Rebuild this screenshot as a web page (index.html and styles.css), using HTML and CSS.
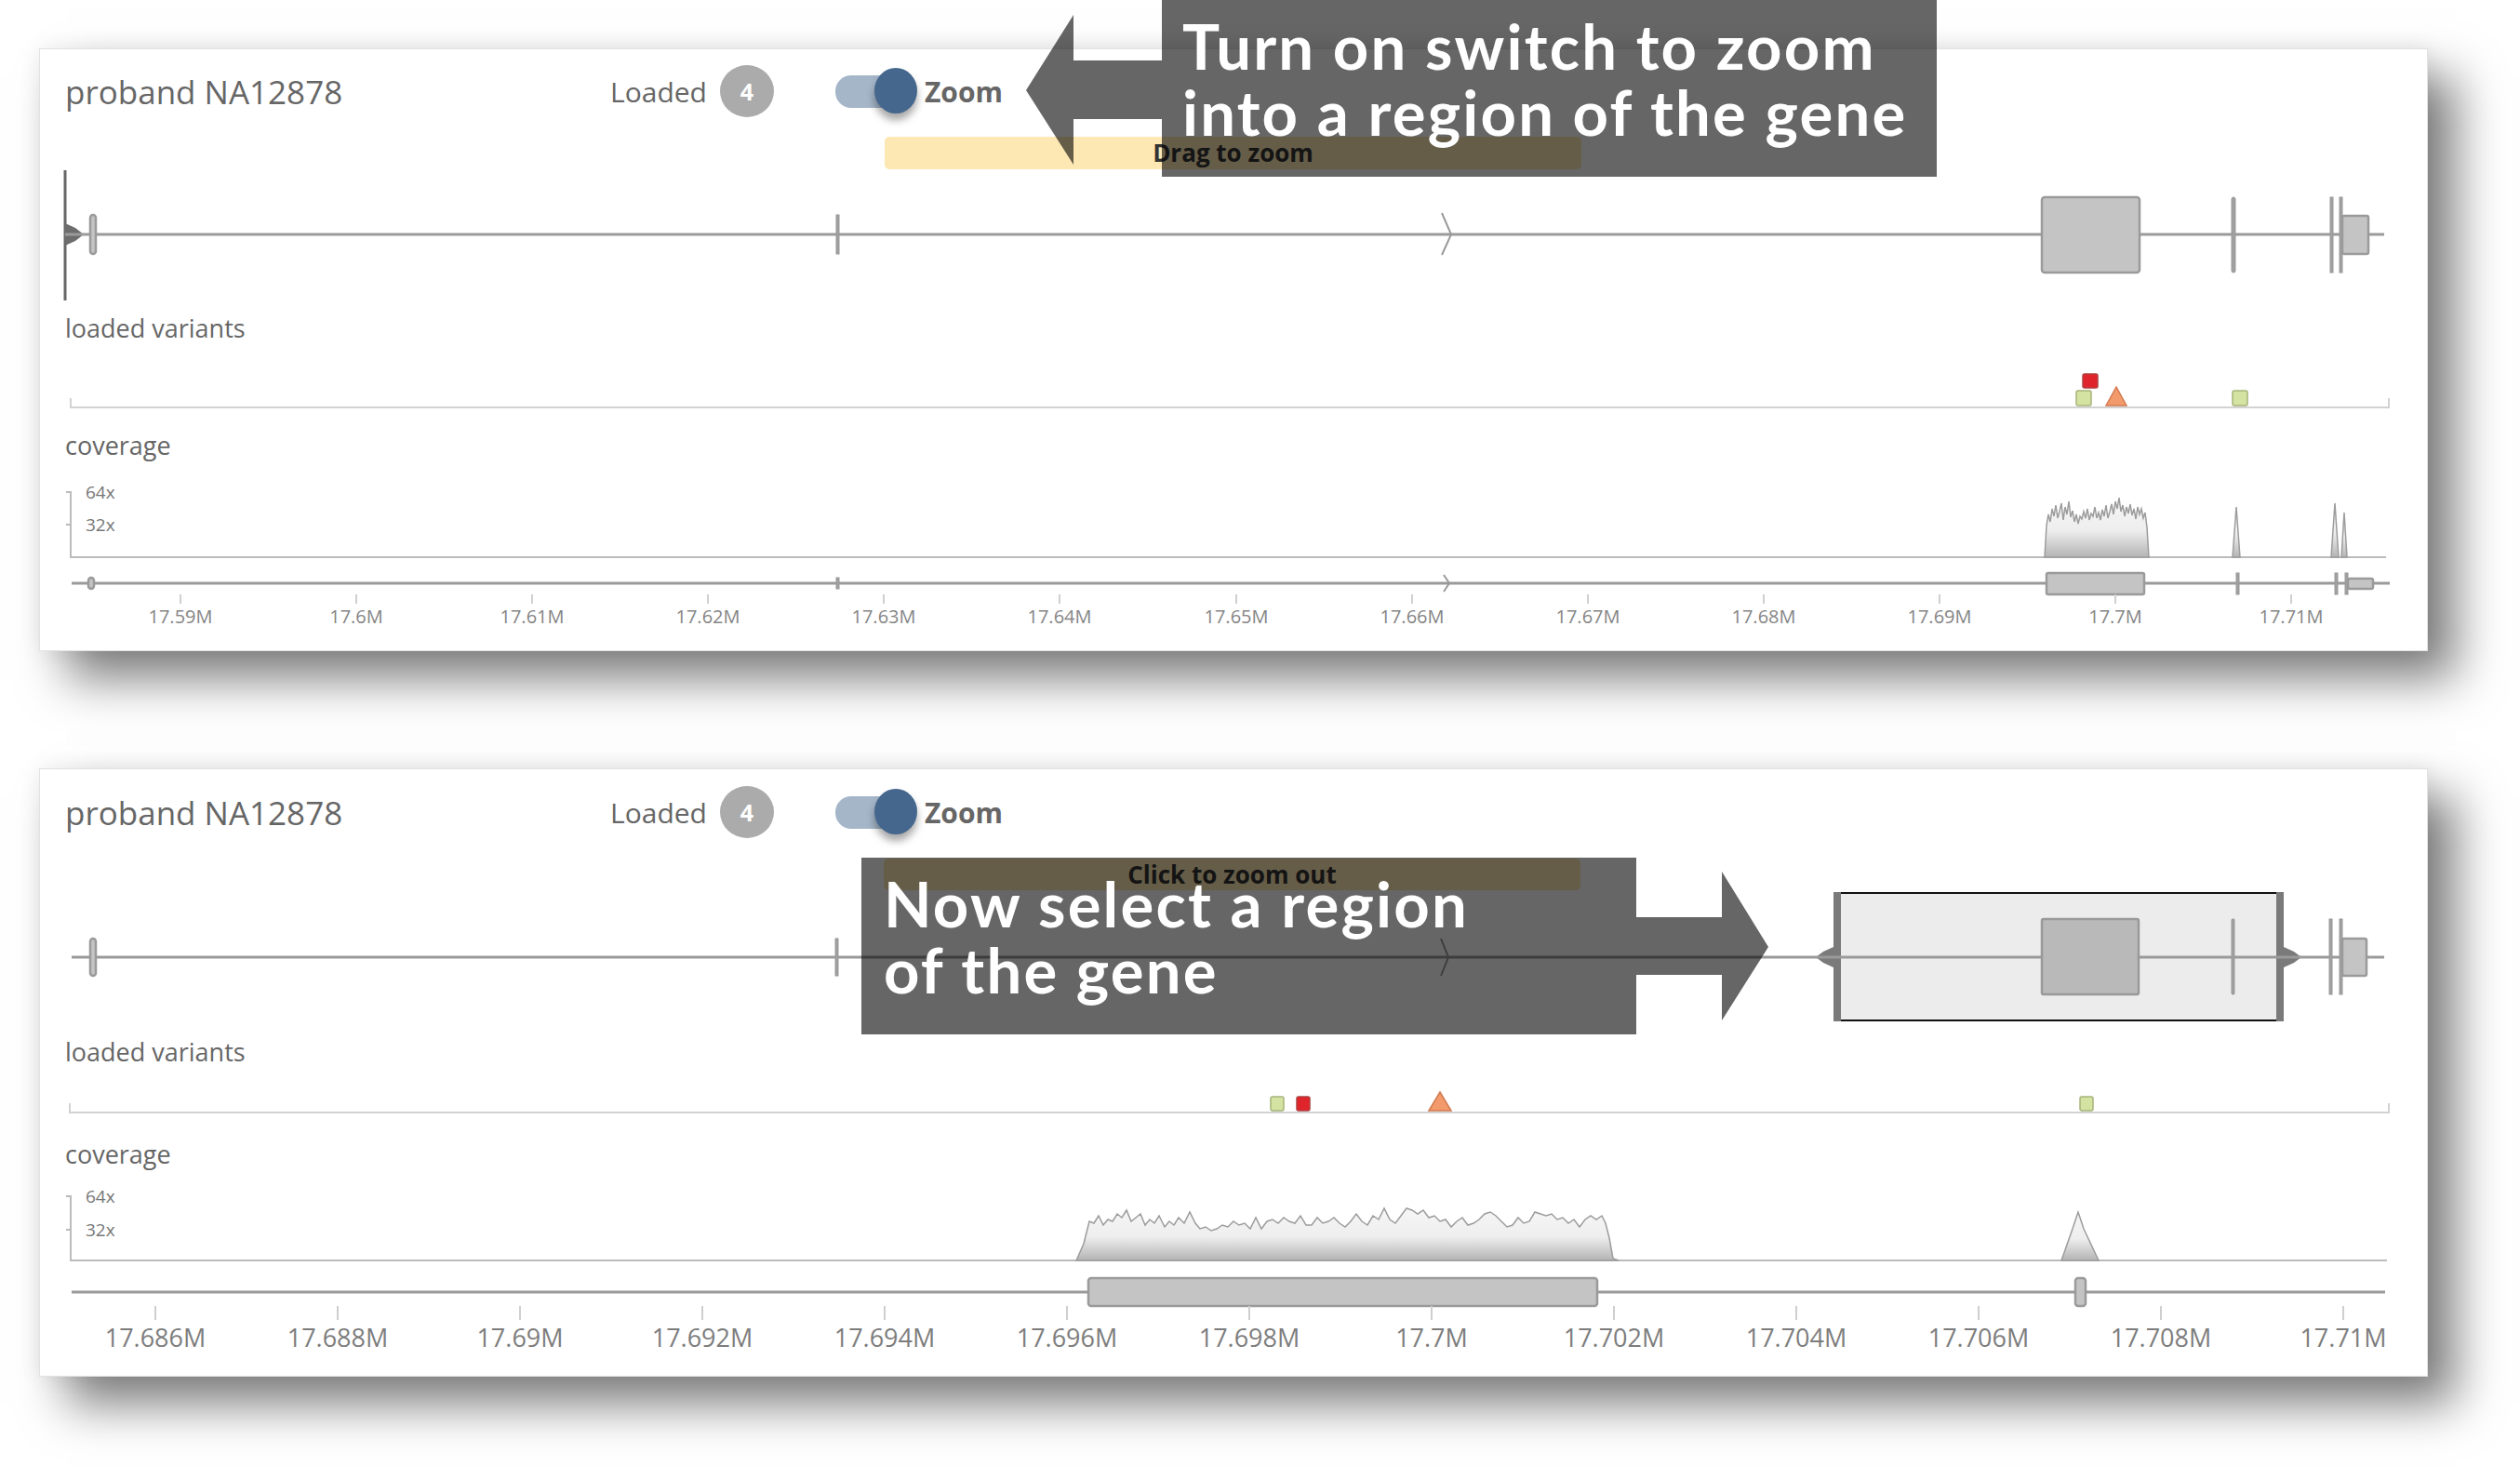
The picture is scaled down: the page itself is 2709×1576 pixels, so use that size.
FILE: index.html
```html
<!DOCTYPE html>
<html>
<head>
<meta charset="utf-8">
<link rel="stylesheet" href="styles.css">
</head>
<body>
<div class="page">

  <!-- TOP CARD -->
  <section class="card card-top">
    <div class="card-head">
      <div class="title">proband NA12878</div>
      <div class="loaded">Loaded</div>
      <div class="badge">4</div>
      <div class="toggle"><div class="toggle-track"></div><div class="toggle-knob"></div></div>
      <div class="zoom-label">Zoom</div>
    </div>

    <svg class="track gene-top" viewBox="0 0 2566 194" preserveAspectRatio="none">
      <line x1="27" y1="40" x2="27" y2="180" class="brush-line"/>
      <polygon points="27,97 38,102 47,109 38,116 27,121" class="handle"/>
      <line x1="27" y1="109" x2="2520" y2="109" class="gline"/>
      <rect x="54" y="88" width="6" height="42" rx="3" class="exon"/>
      <rect x="856" y="88" width="3" height="42" class="tick-exon"/>
      <polyline points="1507,86 1517,109 1507,131" class="chev"/>
      <rect x="2152" y="69" width="105" height="81" rx="3" class="exon"/>
      <rect x="2356" y="69" width="4" height="81" rx="2" class="tick-exon"/>
      <rect x="2462" y="69" width="3" height="81" class="tick-exon"/>
      <rect x="2472" y="69" width="3" height="81" class="tick-exon"/>
      <rect x="2475" y="89" width="28" height="41" rx="2" class="exon"/>
    </svg>

    <div class="track-label">loaded variants</div>
    <svg class="track var-top" viewBox="0 0 2566 94" preserveAspectRatio="none">
      <polyline points="33,59 33,69 2525,69 2525,59" class="vbase"/>
      <rect x="2196" y="33" width="16" height="15" rx="2" class="v-red"/>
      <rect x="2189" y="51" width="16" height="16" rx="2" class="v-green"/>
      <polygon points="2221,67 2232,47 2243,67" class="v-orange"/>
      <rect x="2357" y="51" width="16" height="16" rx="2" class="v-green"/>
    </svg>

    <div class="track-label">coverage</div>
    <svg class="track cov-top" viewBox="0 0 2566 114" preserveAspectRatio="none">
      <defs>
        <linearGradient id="covg" x1="0" y1="0" x2="0" y2="1">
          <stop offset="0" stop-color="#f6f6f6"/>
          <stop offset="0.55" stop-color="#eeeeee"/>
          <stop offset="1" stop-color="#b4b4b4"/>
        </linearGradient>
      </defs>
      <polyline points="28,34 33,34 33,104 2522,104" class="caxis"/>
      <line x1="28" y1="69" x2="33" y2="69" class="caxis"/>
      <text x="49" y="41" class="clabel">64x</text>
      <text x="49" y="76" class="clabel">32x</text>
      <path class="cov" d="M2155,104 L2157,70 L2159,58 L2161,66 L2163,52 L2165,60 L2167,48 L2169,62 L2171,55 L2173,46 L2175,64 L2177,50 L2179,58 L2181,44 L2183,61 L2185,54 L2187,66 L2189,58 L2191,68 L2193,60 L2195,63 L2197,55 L2199,62 L2201,52 L2203,64 L2205,57 L2207,60 L2209,50 L2211,62 L2213,56 L2215,64 L2217,53 L2219,60 L2221,48 L2223,62 L2225,55 L2227,47 L2229,58 L2231,44 L2233,52 L2235,40 L2237,55 L2239,48 L2241,60 L2243,50 L2245,57 L2247,47 L2249,59 L2251,52 L2253,63 L2255,50 L2257,58 L2259,52 L2261,62 L2263,56 L2265,72 L2267,104 Z"/>
      <path class="cov" d="M2357,104 L2361,50 L2365,104 Z"/>
      <path class="cov" d="M2463,104 L2467,46 L2471,104 Z"/>
      <path class="cov" d="M2474,104 L2477,56 L2480,104 Z"/>
    </svg>

    <svg class="track axis-top" viewBox="0 0 2566 84" preserveAspectRatio="none">
      <line x1="34" y1="18" x2="2526" y2="18" class="gline"/>
      <rect x="52" y="12" width="6" height="12" rx="3" class="exon"/>
      <rect x="856" y="12" width="3" height="12" class="tick-exon"/>
      <polyline points="1509,9 1515,18 1509,27" class="chev"/>
      <rect x="2157" y="7" width="105" height="23" rx="2" class="exon"/>
      <rect x="2361" y="7" width="3" height="23" class="tick-exon"/>
      <rect x="2467" y="7" width="3" height="23" class="tick-exon"/>
      <rect x="2478" y="7" width="3" height="23" class="tick-exon"/>
      <rect x="2481" y="13" width="27" height="11" rx="2" class="exon"/>
      <g class="ticks">
        <line x1="151" y1="30" x2="151" y2="40"/><line x1="340" y1="30" x2="340" y2="40"/>
        <line x1="529" y1="30" x2="529" y2="40"/><line x1="718" y1="30" x2="718" y2="40"/>
        <line x1="907" y1="30" x2="907" y2="40"/><line x1="1096" y1="30" x2="1096" y2="40"/>
        <line x1="1286" y1="30" x2="1286" y2="40"/><line x1="1475" y1="30" x2="1475" y2="40"/>
        <line x1="1664" y1="30" x2="1664" y2="40"/><line x1="1853" y1="30" x2="1853" y2="40"/>
        <line x1="2042" y1="30" x2="2042" y2="40"/><line x1="2231" y1="30" x2="2231" y2="40"/>
        <line x1="2420" y1="30" x2="2420" y2="40"/>
      </g>
      <g class="tlabels-s">
        <text x="151" y="61">17.59M</text><text x="340" y="61">17.6M</text>
        <text x="529" y="61">17.61M</text><text x="718" y="61">17.62M</text>
        <text x="907" y="61">17.63M</text><text x="1096" y="61">17.64M</text>
        <text x="1286" y="61">17.65M</text><text x="1475" y="61">17.66M</text>
        <text x="1664" y="61">17.67M</text><text x="1853" y="61">17.68M</text>
        <text x="2042" y="61">17.69M</text><text x="2231" y="61">17.7M</text>
        <text x="2420" y="61">17.71M</text>
      </g>
    </svg>
  </section>

  <!-- BOTTOM CARD -->
  <section class="card card-bottom">
    <div class="card-head head-b">
      <div class="title">proband NA12878</div>
      <div class="loaded">Loaded</div>
      <div class="badge">4</div>
      <div class="toggle"><div class="toggle-track"></div><div class="toggle-knob"></div></div>
      <div class="zoom-label">Zoom</div>
    </div>

    <svg class="track gene-bottom" viewBox="0 0 2566 196" preserveAspectRatio="none">
      <rect x="1932" y="41" width="476" height="137" class="sel"/>
      <rect x="1928" y="40" width="8" height="139" class="sel-edge"/>
      <rect x="2404" y="40" width="8" height="139" class="sel-edge"/>
      <polygon points="1928,99 1917,104 1909,110 1917,116 1928,121" class="handle-b"/>
      <polygon points="2412,99 2423,104 2431,110 2423,116 2412,121" class="handle-b"/>
      <line x1="34" y1="110" x2="2520" y2="110" class="gline"/>
      <rect x="54" y="90" width="6" height="40" rx="3" class="exon"/>
      <rect x="855" y="90" width="3" height="40" class="tick-exon"/>
      <polyline points="1506,90 1514,110 1506,130" class="chev"/>
      <rect x="2152" y="69" width="104" height="81" rx="2" class="exon-d"/>
      <rect x="2356" y="69" width="3" height="81" rx="1" class="tick-exon"/>
      <rect x="2461" y="69" width="3" height="81" class="tick-exon"/>
      <rect x="2472" y="69" width="3" height="81" class="tick-exon"/>
      <rect x="2475" y="90" width="26" height="40" rx="2" class="exon"/>
    </svg>

    <div class="track-label">loaded variants</div>
    <svg class="track var-bottom" viewBox="0 0 2566 78" preserveAspectRatio="none">
      <polyline points="32,39 32,49 2525,49 2525,39" class="vbase"/>
      <rect x="1323" y="32" width="14" height="15" rx="2" class="v-green"/>
      <rect x="1351" y="32" width="14" height="15" rx="2" class="v-red"/>
      <polygon points="1493,47 1505,27 1517,47" class="v-orange"/>
      <rect x="2193" y="32" width="14" height="15" rx="2" class="v-green"/>
    </svg>

    <div class="track-label">coverage</div>
    <svg class="track cov-bottom" viewBox="0 0 2566 108" preserveAspectRatio="none">
      <defs>
        <linearGradient id="covg2" x1="0" y1="0" x2="0" y2="1">
          <stop offset="0" stop-color="#f6f6f6"/>
          <stop offset="0.55" stop-color="#eeeeee"/>
          <stop offset="1" stop-color="#b4b4b4"/>
        </linearGradient>
      </defs>
      <polyline points="28,29 33,29 33,98 2523,98" class="caxis"/>
      <line x1="28" y1="65" x2="33" y2="65" class="caxis"/>
      <text x="49" y="36" class="clabel">64x</text>
      <text x="49" y="72" class="clabel">32x</text>
      <path class="cov2" d="M1114,98 L1122,80 L1128,56 L1133,58 L1138,50 L1143,60 L1148,54 L1153,56 L1158,48 L1163,52 L1168,44 L1173,56 L1178,52 L1183,48 L1188,60 L1193,54 L1198,58 L1203,50 L1209,62 L1214,56 L1219,60 L1224,52 L1230,58 L1236,46 L1242,58 L1247,64 L1253,62 L1259,66 L1265,64 L1271,60 L1277,62 L1283,56 L1289,60 L1295,58 L1301,64 L1307,52 L1313,64 L1319,56 L1325,54 L1331,58 L1337,52 L1343,56 L1349,58 L1355,50 L1361,60 L1367,60 L1373,52 L1379,58 L1385,56 L1391,52 L1397,58 L1403,62 L1409,56 L1415,48 L1421,56 L1427,60 L1433,50 L1439,54 L1445,42 L1451,54 L1457,58 L1463,50 L1469,42 L1475,44 L1481,48 L1487,44 L1493,52 L1499,50 L1505,56 L1511,54 L1517,62 L1523,56 L1529,52 L1535,60 L1541,58 L1547,54 L1553,48 L1559,46 L1565,50 L1571,56 L1577,62 L1583,60 L1589,52 L1595,58 L1601,56 L1607,46 L1613,48 L1619,50 L1625,48 L1631,54 L1637,52 L1643,58 L1649,54 L1655,62 L1661,54 L1667,50 L1673,54 L1679,50 L1683,58 L1687,74 L1691,96 L1697,98 Z"/>
      <path class="cov2" d="M2173,98 L2185,64 L2191,46 L2197,64 L2213,98 Z"/>
    </svg>

    <svg class="track axis-bottom" viewBox="0 0 2566 108" preserveAspectRatio="none">
      <line x1="34" y1="24" x2="2521" y2="24" class="gline"/>
      <rect x="1127" y="9" width="547" height="30" rx="3" class="exon"/>
      <rect x="2188" y="9" width="11" height="30" rx="3" class="exon"/>
      <g class="ticks">
        <line x1="124" y1="39" x2="124" y2="54"/><line x1="320" y1="39" x2="320" y2="54"/>
        <line x1="516" y1="39" x2="516" y2="54"/><line x1="712" y1="39" x2="712" y2="54"/>
        <line x1="908" y1="39" x2="908" y2="54"/><line x1="1104" y1="39" x2="1104" y2="54"/>
        <line x1="1300" y1="39" x2="1300" y2="54"/><line x1="1496" y1="39" x2="1496" y2="54"/>
        <line x1="1692" y1="39" x2="1692" y2="54"/><line x1="1888" y1="39" x2="1888" y2="54"/>
        <line x1="2084" y1="39" x2="2084" y2="54"/><line x1="2280" y1="39" x2="2280" y2="54"/>
        <line x1="2476" y1="39" x2="2476" y2="54"/>
      </g>
      <g class="tlabels-l">
        <text x="124" y="83">17.686M</text><text x="320" y="83">17.688M</text>
        <text x="516" y="83">17.69M</text><text x="712" y="83">17.692M</text>
        <text x="908" y="83">17.694M</text><text x="1104" y="83">17.696M</text>
        <text x="1300" y="83">17.698M</text><text x="1496" y="83">17.7M</text>
        <text x="1692" y="83">17.702M</text><text x="1888" y="83">17.704M</text>
        <text x="2084" y="83">17.706M</text><text x="2280" y="83">17.708M</text>
        <text x="2476" y="83">17.71M</text>
      </g>
    </svg>
  </section>

  <!-- overlays -->
  <div class="hint hint-drag">Drag to zoom</div>
  <div class="hint hint-click">Click to zoom out</div>

  <svg class="arrow arrow-left" viewBox="0 0 146 161">
    <polygon points="0,81 51,0 51,49 146,49 146,112 51,112 51,161"/>
  </svg>
  <div class="callout callout-top">Turn on switch to zoom<br>into a region of the gene</div>

  <svg class="arrow arrow-right" viewBox="0 0 142 160">
    <polygon points="0,49 92,49 92,0 142,81 92,160 92,111 0,111"/>
  </svg>
  <div class="callout callout-bottom">Now select a region<br>of the gene</div>
</div>
</body>
</html>
```

FILE: styles.css
```css
html, body {
  margin: 0;
  padding: 0;
  background: #ffffff;
}

.page {
  position: relative;
  width: 2709px;
  height: 1576px;
  overflow: hidden;
  padding-top: 52px;
  box-sizing: border-box;
  font-family: "Open Sans", "Liberation Sans", sans-serif;
}

.card {
  margin-left: 42px;
  width: 2568px;
  box-sizing: border-box;
  background: #ffffff;
  border: 1px solid #e2e2e2;
  box-shadow: 0 0 22px rgba(0, 0, 0, 0.07), 30px 30px 48px rgba(0, 0, 0, 0.5);
}

.card-top {
  height: 648px;
}

.card-bottom {
  margin-top: 126px;
  height: 654px;
}

.card-head {
  display: flex;
  align-items: center;
  height: 90px;
  padding-left: 27px;
}

.head-b {
  height: 92px;
}

.title {
  flex: 0 0 586px;
  font-size: 35px;
  color: #666;
}

.loaded {
  font-size: 30px;
  color: #666;
}

.badge {
  width: 58px;
  height: 56px;
  margin-left: 14px;
  border-radius: 50%;
  background: #ababab;
  color: #fff;
  font-weight: 700;
  font-size: 25px;
  display: flex;
  align-items: center;
  justify-content: center;
}

.toggle {
  position: relative;
  width: 88px;
  height: 50px;
  margin-left: 66px;
}

.toggle-track {
  position: absolute;
  left: 0;
  top: 8px;
  width: 66px;
  height: 35px;
  border-radius: 17px;
  background: #a5b6c9;
}

.toggle-knob {
  position: absolute;
  left: 42px;
  top: 0;
  width: 46px;
  height: 49px;
  border-radius: 50%;
  background: #45678e;
  box-shadow: 0 7px 8px rgba(0, 0, 0, 0.35);
}

.zoom-label {
  margin-left: 8px;
  font-size: 30px;
  font-weight: 700;
  color: #666;
}

.track {
  display: block;
  width: 100%;
}

.gene-top { height: 194px; }
.var-top { height: 94px; }
.cov-top { height: 114px; }
.axis-top { height: 84px; }
.gene-bottom { height: 196px; }
.var-bottom { height: 78px; }
.cov-bottom { height: 108px; }
.axis-bottom { height: 108px; }

.track-label {
  height: 32px;
  line-height: 32px;
  padding-left: 27px;
  font-size: 27px;
  color: #666;
}

.brush-line { stroke: #666; stroke-width: 3; }
.handle { fill: #6d6d6d; }
.handle-b { fill: #7a7a7a; }
.gline { stroke: #9a9a9a; stroke-width: 3; }
.exon { fill: #c4c4c4; stroke: #9a9a9a; stroke-width: 2.5; }
.exon-d { fill: #b9b9b9; stroke: #999; stroke-width: 2.5; }
.tick-exon { fill: #a0a0a0; stroke: #999; stroke-width: 1; }
.chev { fill: none; stroke: #9a9a9a; stroke-width: 2; }
.sel { fill: #ececec; stroke: #111; stroke-width: 2; }
.sel-edge { fill: #7a7a7a; }

.vbase { fill: none; stroke: #d2d2d2; stroke-width: 2; }
.v-red { fill: #e0242b; stroke: #b04040; stroke-width: 1.5; }
.v-green { fill: #d4e2a2; stroke: #a6b47a; stroke-width: 1.5; }
.v-orange { fill: #f39a6c; stroke: #d27a50; stroke-width: 1.5; }

.caxis { fill: none; stroke: #bbb; stroke-width: 2; }
.clabel { font-family: "Open Sans", "Liberation Sans", sans-serif; font-size: 19px; fill: #777; }
.cov { fill: url(#covg); stroke: #9c9c9c; stroke-width: 1.5; }
.cov2 { fill: url(#covg2); stroke: #9c9c9c; stroke-width: 1.5; }

.ticks line { stroke: #cfcfcf; stroke-width: 2; }
.tlabels-s text {
  font-family: "Open Sans", "Liberation Sans", sans-serif;
  font-size: 20px;
  fill: #858585;
  text-anchor: middle;
}
.tlabels-l text {
  font-family: "Open Sans", "Liberation Sans", sans-serif;
  font-size: 27px;
  fill: #7d7d7d;
  text-anchor: middle;
}

.hint {
  position: absolute;
  height: 35px;
  width: 749px;
  border-radius: 5px;
  background: #fde8b4;
  color: #333;
  font-weight: 700;
  font-size: 26px;
  line-height: 35px;
  text-align: center;
}

.hint-drag { left: 951px; top: 147px; }
.hint-click { left: 950px; top: 923px; height: 34px; line-height: 34px; }

.arrow {
  position: absolute;
  display: block;
}
.arrow polygon { fill: rgba(0, 0, 0, 0.6); }
.arrow-left { left: 1103px; top: 16px; width: 146px; height: 161px; }
.arrow-right { left: 1759px; top: 937px; width: 142px; height: 160px; }

.callout {
  position: absolute;
  width: 833px;
  height: 190px;
  box-sizing: border-box;
  padding: 14px 22px;
  background: rgba(0, 0, 0, 0.6);
  color: #fff;
  font-family: Lato, "Open Sans", sans-serif;
  font-weight: 700;
  font-size: 67px;
  line-height: 71px;
  letter-spacing: 2.2px;
  white-space: nowrap;
}

.callout-top { left: 1249px; top: 0; }
.callout-bottom { left: 926px; top: 922px; padding-left: 24px; }
```
